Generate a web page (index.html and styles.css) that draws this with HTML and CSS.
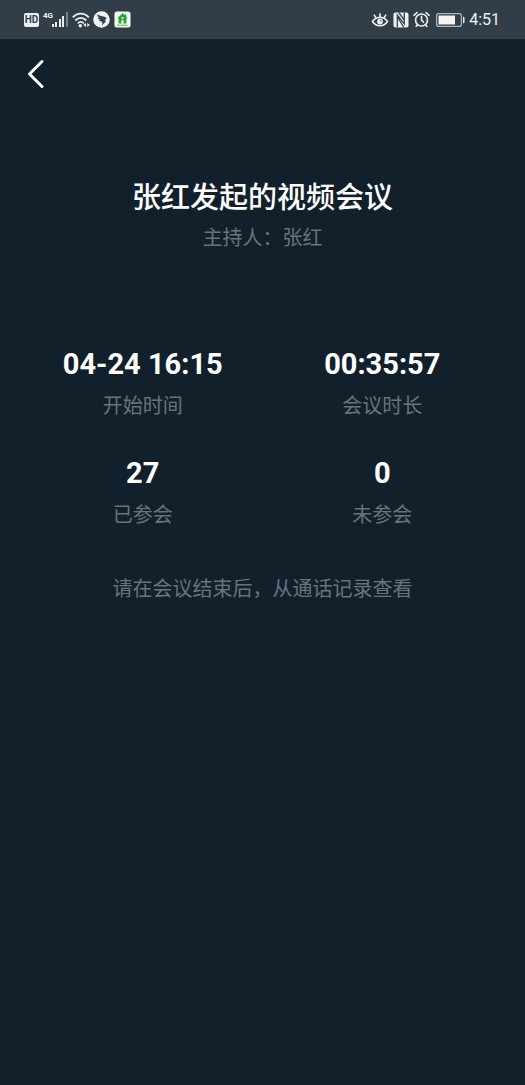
FILE: index.html
```html
<!DOCTYPE html>
<html lang="zh-CN">
<head>
<meta charset="utf-8">
<meta name="viewport" content="width=device-width, initial-scale=1">
<title>张红发起的视频会议</title>
<link rel="stylesheet" href="styles.css">
</head>
<body>
<header class="status-bar">
  <div class="status-group status-left">
    <span class="hd-badge">HD</span>
    <span class="signal">
      <span class="network">4G</span>
      <svg width="16" height="15" viewBox="0 0 16 15" fill="#eef1f3" aria-hidden="true">
        <rect x="0" y="12" width="2" height="3"/><rect x="3" y="10" width="2" height="5"/><rect x="7" y="7" width="2" height="8"/><rect x="10" y="4" width="2" height="11"/><rect x="14" y="0" width="2" height="15" fill="#76818a"/>
      </svg>
    </span>
    <svg class="wifi" width="18" height="16" viewBox="0 0 18 16" fill="none" stroke="#eef1f3" stroke-width="1.8" aria-hidden="true">
      <path d="M.8 5.400C5.600.4 12 .4 16.800 5.400M3.300 8.500C6.800 4.900 10.800 4.900 14.300 8.500M5.800 11.400C7.800 9.400 9.800 9.400 11.800 11.400"/>
      <circle cx="8.300" cy="13.800" r="1.700" fill="#eef1f3" stroke="none"/>
      <path d="M14 11v4l-2.700-2zM15.200 11v4l2.700-2z" fill="#eef1f3" stroke="none"/>
    </svg>
    <svg class="bird" width="17" height="17" viewBox="0 0 17 17" aria-hidden="true">
      <circle cx="8.500" cy="8.500" r="8.300" fill="#f1f3f4"/>
      <path d="M4 3.300c2.500 1.400 5.700 2 8.600 3 .8.300.9.800.5 1.500L11.800 10h1.500l-4.500 4.800.9-3.300H8.300l.4-1.200c-1.400.2-2.300-.2-3-1.100l2-.2C5.800 8.500 4.900 7.600 4.600 6.500l2.300.3C5 5.900 4.100 4.800 4 3.300z" fill="#34414a"/>
    </svg>
    <svg width="17" height="17" viewBox="0 0 17 17" aria-hidden="true">
      <rect x=".5" y=".5" width="16" height="16" rx="2.500" fill="#f5faf5"/>
      <path d="M8.500 2.300 3.600 7l1 .8v4.600h7.800V7.800l1-.8-1.300-1.300V3.300h-1.500v1z" fill="#28a22b"/>
      <path d="M7.300 12.400V9.600q1.200-1.400 2.400 0v2.800zM7.400 6.300h2.200v1.400H7.400z" fill="#f5faf5"/>
      <path d="M3 14.900l1-1.500.8 1.500.5-1 .8 1 .8-1 .7 1 .8-1.500.7 1.500.8-1 .8 1 .7-1.400.8 1.400.9-1 .8.500" fill="none" stroke="#58b85a" stroke-width=".8"/>
    </svg>
  </div>
  <div class="status-group status-right">
    <svg width="18" height="16" viewBox="0 0 18 16" fill="none" stroke="#eef1f3" stroke-width="1.600" aria-hidden="true">
      <path d="M1.500 9.500C5.500 3.800 12.500 3.800 16.500 9.500 12.500 15.200 5.500 15.200 1.500 9.500zM9 4.700V1.300M4.800 5.700 3 2.700M13.200 5.700l1.800-3"/>
      <circle cx="9" cy="9.500" r="2.900" fill="#eef1f3" stroke="none"/><circle cx="9.800" cy="8.700" r=".8" fill="#34414a" stroke="none"/>
    </svg>
    <svg width="16" height="16" viewBox="0 0 16 16" aria-hidden="true">
      <rect x=".5" y=".5" width="15" height="15" rx="2" fill="#eef1f3"/>
      <path d="M4.300 15.500V3.200l7 8.600V.500M4.300 4.500 10.800 15.500M5.700.5 11.300 8" fill="none" stroke="#34414a" stroke-width="1.300"/>
    </svg>
    <svg width="17" height="17" viewBox="0 0 17 17" fill="none" stroke="#eef1f3" stroke-width="1.600" stroke-linecap="round" aria-hidden="true">
      <circle cx="8.500" cy="9" r="6"/><path d="M8.500 5.500V9l2 2.200M1 4.300 4 1.500M16 4.300 13 1.500M4.400 13.700 3.200 15.300M12.600 13.700l1.200 1.600"/>
    </svg>
    <svg class="battery" width="29" height="14" viewBox="0 0 29 14" aria-hidden="true">
      <rect x=".6" y=".6" width="24.800" height="12.800" rx="2.200" fill="none" stroke="#aeb6bb" stroke-width="1.200"/>
      <rect x="2.500" y="2.500" width="16.500" height="9" fill="#f4f4f5"/>
      <path d="M27 3.500q1.500.5 1.500 1.500v4q0 1-1.500 1.500z" fill="#eef1f3"/>
    </svg>
    <time class="clock">4:51</time>
  </div>
</header>

<nav class="nav">
  <button class="back" type="button" aria-label="返回">
    <svg width="18" height="30" viewBox="0 0 18 30" fill="none" stroke="#fff" stroke-width="3" stroke-linecap="round" stroke-linejoin="round" aria-hidden="true"><path d="M15 2.500 2.500 15l12.500 12.500"/></svg>
  </button>
</nav>

<main class="meeting">
  <h1 class="title">张红发起的视频会议</h1>
  <p class="host">主持人：张红</p>
  <dl class="stats">
    <div class="stat"><dt class="label">开始时间</dt><dd class="value">04-24 16:15</dd></div>
    <div class="stat"><dt class="label">会议时长</dt><dd class="value">00:35:57</dd></div>
    <div class="stat"><dt class="label">已参会</dt><dd class="value">27</dd></div>
    <div class="stat"><dt class="label">未参会</dt><dd class="value">0</dd></div>
  </dl>
  <p class="note">请在会议结束后，从通话记录查看</p>
</main>
</body>
</html>
```
FILE: styles.css
```css
* {
  box-sizing: border-box;
}

body {
  margin: 0;
  min-height: 100vh;
  background: #12202c;
  color: #fff;
  font-family: Roboto, "Noto Sans CJK SC", sans-serif;
}

.status-bar {
  display: flex;
  justify-content: space-between;
  align-items: center;
  height: 39px;
  padding: 0 25px 0 24px;
  background: #323e47;
  color: #eef1f3;
}

.status-group {
  display: flex;
  align-items: center;
}

.status-left {
  gap: 4px;
}

.status-right {
  gap: 4px;
}

.status-bar svg {
  display: block;
  flex: none;
}

.hd-badge {
  width: 15px;
  height: 14px;
  border-radius: 2px;
  background: #eef1f3;
  color: #34414a;
  font-size: 10px;
  font-weight: 700;
  line-height: 14px;
  text-align: center;
}

.signal {
  display: flex;
  align-items: flex-start;
  height: 15px;
}

.network {
  width: 9px;
  font-size: 8px;
  font-weight: 700;
  line-height: 8px;
}

.battery {
  margin-left: 2px;
}

.clock {
  font-size: 16px;
  line-height: 20px;
}

.bird {
  margin-left: -1px;
}

.nav {
  display: flex;
  padding: 20px 27px;
}

.back {
  display: flex;
  padding: 0;
  border: 0;
  background: none;
  cursor: pointer;
}

.meeting {
  padding: 68px 23px 24px;
  text-align: center;
}

.title {
  margin: 0;
  font-size: 29px;
  font-weight: 500;
  line-height: 42px;
}

.host,
.note,
.label {
  margin: 0;
  color: #69737c;
  font-size: 20px;
  font-weight: 400;
  line-height: 30px;
}

.host {
  margin-top: 4px;
}

.stats {
  display: grid;
  grid-template-columns: 1fr 1fr;
  row-gap: 34px;
  margin: 93px 0 0;
}

.stat {
  display: flex;
  flex-direction: column-reverse;
  gap: 9px;
}

.value {
  margin: 0;
  font-size: 29px;
  font-weight: 700;
  line-height: 36px;
}

.note {
  margin-top: 44px;
}
```
